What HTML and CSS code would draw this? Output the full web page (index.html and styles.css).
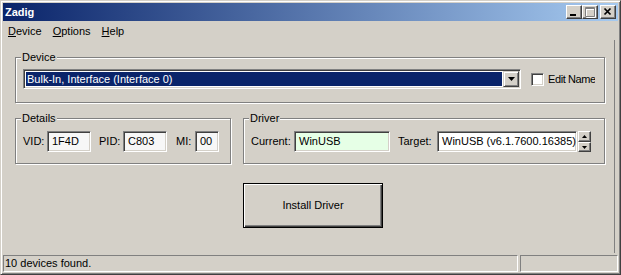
FILE: index.html
```html
<!DOCTYPE html>
<html lang="en">
<head>
    <meta charset="UTF-8">
    <title>Zadig</title>
    <link rel="stylesheet" href="styles.css">
</head>
<body>
    <div class="window">
        <!-- Title bar -->
        <div class="titlebar">
            <span class="title">Zadig</span>
            <div class="caption-buttons">
                <span class="cap-btn">
                    <svg width="14" height="12" viewBox="0 0 14 12"><rect x="3" y="8" width="6" height="2" fill="#000"/></svg>
                </span>
                <span class="cap-btn">
                    <svg width="14" height="12" viewBox="0 0 14 12">
                        <path d="M3.5 2.5h9v9h-9z M3 3.5h10" stroke="#fff" fill="none"/>
                        <path d="M2.5 1.5h9v9h-9z M2 2.5h10" stroke="#808080" fill="none"/>
                    </svg>
                </span>
                <span class="cap-btn cap-close">
                    <svg width="14" height="12" viewBox="0 0 14 12"><path d="M3.5 2.5L9.5 8.5 M9.5 2.5L3.5 8.5" stroke="#000" stroke-width="1.7" fill="none"/></svg>
                </span>
            </div>
        </div>

        <!-- Menu -->
        <div class="menubar">
            <span class="menu-item"><u>D</u>evice</span>
            <span class="menu-item"><u>O</u>ptions</span>
            <span class="menu-item"><u>H</u>elp</span>
        </div>

        <div class="client">
            <!-- Device -->
            <fieldset class="group group-device">
                <legend>Device</legend>
                <div class="device-row">
                    <div class="combo">
                        <div class="combo-value">Bulk-In, Interface (Interface 0)</div>
                        <div class="combo-button">
                            <svg width="7" height="4" viewBox="0 0 7 4"><path d="M0 0h7L3.5 4z" fill="#000"/></svg>
                        </div>
                    </div>
                    <label class="check">
                        <span class="check-box"></span>
                        <span class="check-label">Edit Name</span>
                    </label>
                </div>
            </fieldset>

            <div class="group-row">
                <!-- Details -->
                <fieldset class="group group-details">
                    <legend>Details</legend>
                    <div class="field-row">
                        <span class="field-label lbl-vid">VID:</span>
                        <span class="edit edit-vid">1F4D</span>
                        <span class="field-label lbl-pid">PID:</span>
                        <span class="edit edit-pid">C803</span>
                        <span class="field-label lbl-mi">MI:</span>
                        <span class="edit edit-mi">00</span>
                    </div>
                </fieldset>

                <!-- Driver -->
                <fieldset class="group group-driver">
                    <legend>Driver</legend>
                    <div class="field-row">
                        <span class="field-label lbl-current">Current:</span>
                        <span class="edit edit-current">WinUSB</span>
                        <span class="field-label lbl-target">Target:</span>
                        <span class="edit edit-target">WinUSB (v6.1.7600.16385)</span>
                        <div class="spin">
                            <span class="spin-btn spin-up">
                                <svg width="5" height="3" viewBox="0 0 5 3"><path d="M2.5 0L5 3H0z" fill="#000"/></svg>
                            </span>
                            <span class="spin-btn spin-down">
                                <svg width="5" height="3" viewBox="0 0 5 3"><path d="M0 0h5L2.5 3z" fill="#000"/></svg>
                            </span>
                        </div>
                    </div>
                </fieldset>
            </div>

            <button class="install" type="button">Install Driver</button>
        </div>

        <!-- Status bar -->
        <div class="statusbar">
            <div class="panel panel-main">10 devices found.</div>
            <div class="panel panel-side"></div>
        </div>
    </div>
</body>
</html>
```

FILE: styles.css
```css
* {
    box-sizing: border-box;
}
body {
    margin: 0;
    font-family: "Liberation Sans", Arial, sans-serif;
    font-size: 11px;
    line-height: 13px;
    color: #000;
    background: #D4D0C8;
}
.window {
    width: 621px;
    height: 275px;
    display: flex;
    flex-direction: column;
    background: #D4D0C8;
    border: 1px solid;
    border-color: #D4D0C8 #404040 #404040 #D4D0C8;
    box-shadow: inset 1px 1px #fff, inset -1px -1px #808080;
    padding: 2px;
}

/* title bar */
.titlebar {
    height: 18px;
    flex: none;
    display: flex;
    align-items: center;
    padding-left: 2px;
    background: linear-gradient(to right, #0A246A, #A6CAF0);
    color: #fff;
    font-weight: bold;
}
.title {
    flex: 1;
}
.caption-buttons {
    display: flex;
    margin-right: 2px;
}
.cap-btn {
    width: 16px;
    height: 14px;
    display: flex;
    background: #D4D0C8;
    border: 1px solid;
    border-color: #fff #404040 #404040 #fff;
    box-shadow: inset -1px -1px #808080;
}
.cap-close {
    margin-left: 2px;
}

/* menu */
.menubar {
    height: 19px;
    flex: none;
    display: flex;
    align-items: center;
    padding-top: 1px;
}
.menu-item {
    padding: 0 5px;
}
.menu-item + .menu-item {
    margin-left: 1px;
}

/* client area */
.client {
    flex: 1;
    padding: 11px 0 0 12px;
    margin-right: 3px;
    border-right: 1px solid #808080;
}
.group {
    margin: 0;
    min-width: 0;
    border: 1px solid #808080;
    box-shadow: inset 1px 1px #fff, 1px 1px #fff;
    padding: 5px 0 13px 7px;
}
.group legend {
    padding: 0 1px;
    margin-left: -2px;
    background: #D4D0C8;
    line-height: 13px;
}
.group-device {
    width: 590px;
}
.device-row {
    display: flex;
    align-items: center;
}
.combo {
    width: 498px;
    height: 20px;
    display: flex;
    border: 1px solid;
    border-color: #808080 #fff #fff #808080;
    box-shadow: inset 1px 1px #404040, inset -1px -1px #D4D0C8;
    padding: 1px;
    background: #fff;
}
.combo-value {
    flex: 1;
    margin: 1px;
    padding-left: 1px;
    background: #0A246A;
    color: #fff;
    line-height: 14px;
    white-space: nowrap;
}
.combo-button {
    width: 16px;
    height: 16px;
    display: flex;
    align-items: center;
    justify-content: center;
    background: #D4D0C8;
    border: 1px solid;
    border-color: #D4D0C8 #404040 #404040 #D4D0C8;
    box-shadow: inset 1px 1px #fff, inset -1px -1px #808080;
}
.check {
    width: 64px;
    margin-left: 10px;
    display: flex;
    align-items: center;
    overflow: hidden;
    white-space: nowrap;
}
.check-box {
    flex: none;
    width: 13px;
    height: 13px;
    background: #fff;
    border: 1px solid;
    border-color: #808080 #fff #fff #808080;
    box-shadow: inset 1px 1px #404040, inset -1px -1px #D4D0C8;
    margin-right: 4px;
}
.check-label {
    letter-spacing: -0.4px;
}

.group-row {
    display: flex;
    margin-top: 9px;
}
.group-details,
.group-driver {
    padding: 6px 0 11px 7px;
}
.group-details {
    width: 216px;
}
.group-driver {
    width: 362px;
    margin-left: 12px;
}
.field-row {
    display: flex;
    align-items: center;
}
.field-label {
    flex: none;
}
.edit {
    flex: none;
    height: 21px;
    padding: 1px 3px 0 4px;
    line-height: 17px;
    white-space: nowrap;
    overflow: hidden;
    background: #fff;
    border: 1px solid;
    border-color: #808080 #fff #fff #808080;
    box-shadow: inset 1px 1px #404040, inset -1px -1px #D4D0C8;
}
.lbl-vid { width: 24px; }
.edit-vid { width: 44px; background: #F7F7F7; }
.lbl-pid { width: 24px; margin-left: 8px; }
.edit-pid { width: 44px; background: #F7F7F7; }
.lbl-mi { width: 19px; margin-left: 9px; }
.edit-mi { width: 24px; background: #F7F7F7; }
.lbl-current { width: 43px; }
.edit-current { width: 96px; background: #E6FFE6; }
.lbl-target { width: 39px; margin-left: 8px; }
.edit-target { width: 140px; }
.spin {
    margin-left: 1px;
    display: flex;
    flex-direction: column;
}
.spin-btn {
    width: 13px;
    height: 11px;
    display: flex;
    align-items: center;
    justify-content: center;
    background: #D4D0C8;
    border: 1px solid;
    border-color: #fff #404040 #404040 #fff;
    box-shadow: inset -1px -1px #808080;
}
.spin-down {
    height: 10px;
}

.install {
    display: block;
    width: 140px;
    height: 45px;
    margin: 19px 0 0 228px;
    padding: 0;
    font: inherit;
    color: #000;
    background: #D4D0C8;
    border: 1px solid #000;
    box-shadow: inset 1px 1px #fff, inset -1px -1px #404040, inset -2px -2px #808080;
}

/* status bar */
.statusbar {
    height: 19px;
    flex: none;
    display: flex;
    gap: 2px;
    padding-top: 2px;
}
.panel {
    height: 17px;
    border: 1px solid;
    border-color: #808080 #fff #fff #808080;
    padding-left: 1px;
    line-height: 15px;
}
.panel-main {
    width: 515px;
}
.panel-side {
    flex: 1;
}
```
